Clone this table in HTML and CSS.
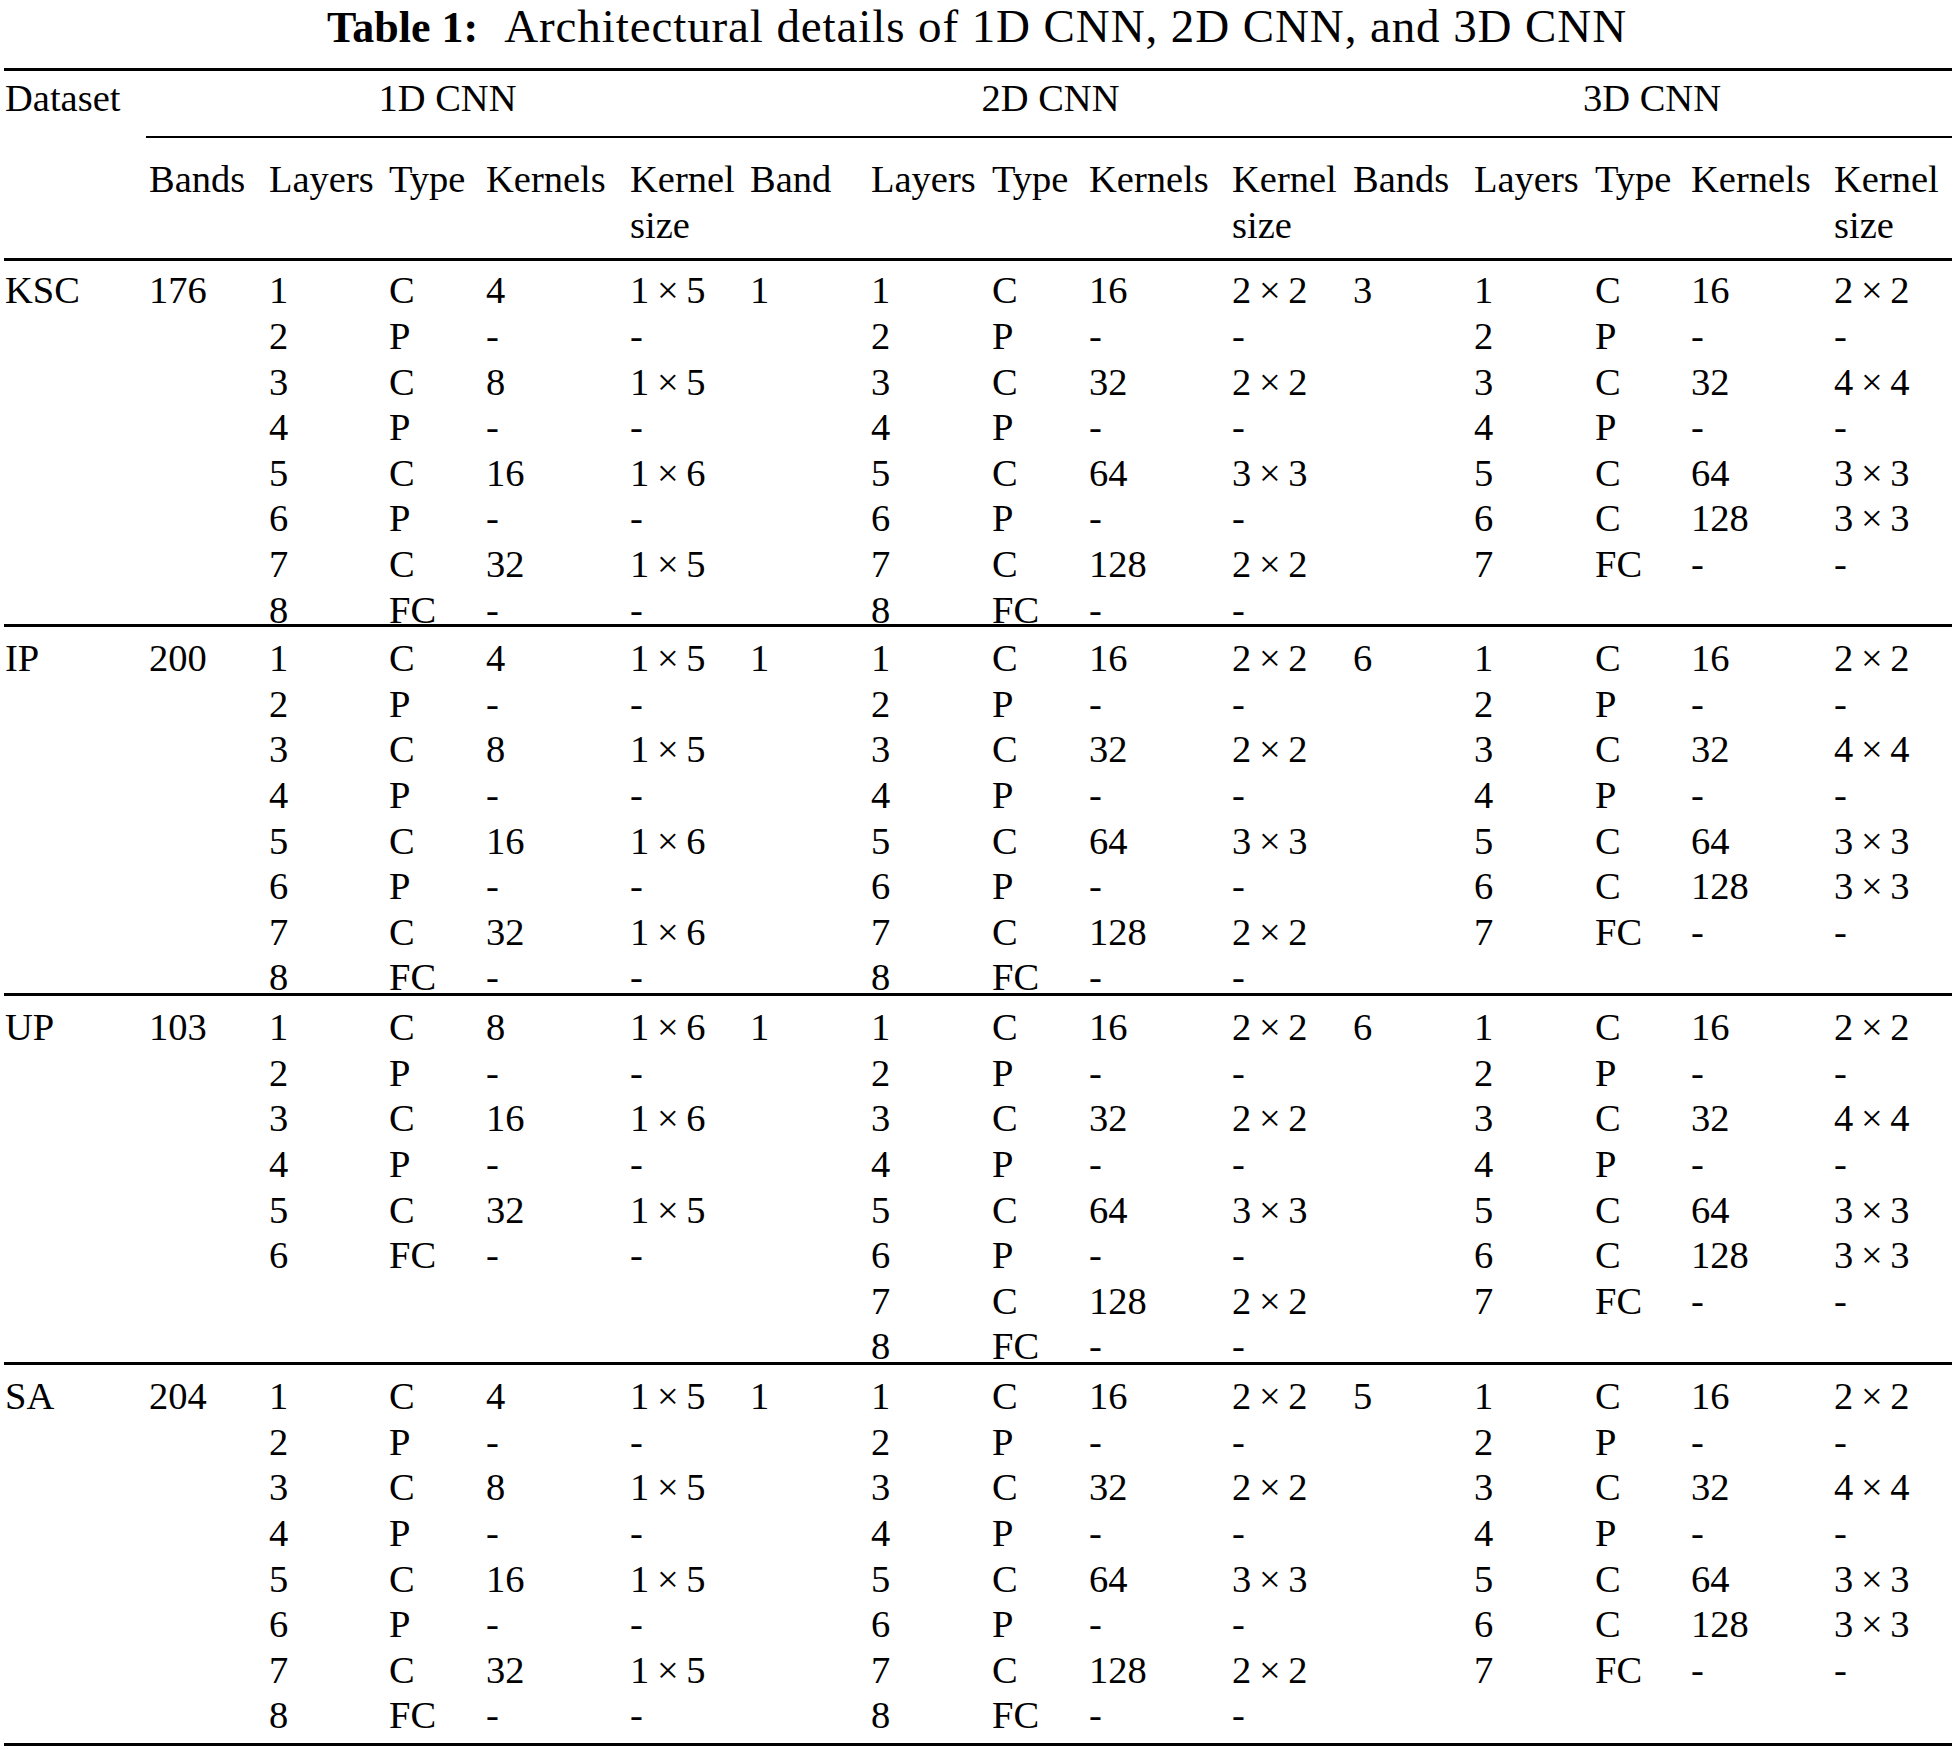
FILE: index.html
```html
<!DOCTYPE html>
<html lang="en">
<head>
<meta charset="utf-8">
<title>Table 1</title>
<link rel="stylesheet" href="styles.css">
</head>
<body>
<div class="page">
  <h1 class="caption"><b class="cap-label">Table 1:</b><span class="cap-text">Architectural details of 1D CNN, 2D CNN, and 3D CNN</span></h1>

  <div class="table">
    <div class="grid head">
      <div class="cell hd-dataset">Dataset</div>
      <div class="cell group g1">1D CNN</div>
      <div class="cell group g2">2D CNN</div>
      <div class="cell group g3">3D CNN</div>

      <div class="cell sub"></div>
      <div class="cell sub">Bands</div>
      <div class="cell sub">Layers</div>
      <div class="cell sub">Type</div>
      <div class="cell sub">Kernels</div>
      <div class="cell sub">Kernel<br>size</div>
      <div class="cell sub">Band</div>
      <div class="cell sub">Layers</div>
      <div class="cell sub">Type</div>
      <div class="cell sub">Kernels</div>
      <div class="cell sub">Kernel<br>size</div>
      <div class="cell sub">Bands</div>
      <div class="cell sub">Layers</div>
      <div class="cell sub">Type</div>
      <div class="cell sub">Kernels</div>
      <div class="cell sub">Kernel<br>size</div>
    </div>

    <!-- KSC -->
    <div class="grid block first">
      <div class="cell">KSC</div>
      <div class="cell">176</div>
      <div class="cell">1<br>2<br>3<br>4<br>5<br>6<br>7<br>8</div>
      <div class="cell">C<br>P<br>C<br>P<br>C<br>P<br>C<br>FC</div>
      <div class="cell">4<br>-<br>8<br>-<br>16<br>-<br>32<br>-</div>
      <div class="cell ks">1 × 5<br>-<br>1 × 5<br>-<br>1 × 6<br>-<br>1 × 5<br>-</div>
      <div class="cell">1</div>
      <div class="cell">1<br>2<br>3<br>4<br>5<br>6<br>7<br>8</div>
      <div class="cell">C<br>P<br>C<br>P<br>C<br>P<br>C<br>FC</div>
      <div class="cell">16<br>-<br>32<br>-<br>64<br>-<br>128<br>-</div>
      <div class="cell ks">2 × 2<br>-<br>2 × 2<br>-<br>3 × 3<br>-<br>2 × 2<br>-</div>
      <div class="cell">3</div>
      <div class="cell">1<br>2<br>3<br>4<br>5<br>6<br>7</div>
      <div class="cell">C<br>P<br>C<br>P<br>C<br>C<br>FC</div>
      <div class="cell">16<br>-<br>32<br>-<br>64<br>128<br>-</div>
      <div class="cell ks">2 × 2<br>-<br>4 × 4<br>-<br>3 × 3<br>3 × 3<br>-</div>
    </div>

    <!-- IP -->
    <div class="grid block">
      <div class="cell">IP</div>
      <div class="cell">200</div>
      <div class="cell">1<br>2<br>3<br>4<br>5<br>6<br>7<br>8</div>
      <div class="cell">C<br>P<br>C<br>P<br>C<br>P<br>C<br>FC</div>
      <div class="cell">4<br>-<br>8<br>-<br>16<br>-<br>32<br>-</div>
      <div class="cell ks">1 × 5<br>-<br>1 × 5<br>-<br>1 × 6<br>-<br>1 × 6<br>-</div>
      <div class="cell">1</div>
      <div class="cell">1<br>2<br>3<br>4<br>5<br>6<br>7<br>8</div>
      <div class="cell">C<br>P<br>C<br>P<br>C<br>P<br>C<br>FC</div>
      <div class="cell">16<br>-<br>32<br>-<br>64<br>-<br>128<br>-</div>
      <div class="cell ks">2 × 2<br>-<br>2 × 2<br>-<br>3 × 3<br>-<br>2 × 2<br>-</div>
      <div class="cell">6</div>
      <div class="cell">1<br>2<br>3<br>4<br>5<br>6<br>7</div>
      <div class="cell">C<br>P<br>C<br>P<br>C<br>C<br>FC</div>
      <div class="cell">16<br>-<br>32<br>-<br>64<br>128<br>-</div>
      <div class="cell ks">2 × 2<br>-<br>4 × 4<br>-<br>3 × 3<br>3 × 3<br>-</div>
    </div>

    <!-- UP -->
    <div class="grid block">
      <div class="cell">UP</div>
      <div class="cell">103</div>
      <div class="cell">1<br>2<br>3<br>4<br>5<br>6</div>
      <div class="cell">C<br>P<br>C<br>P<br>C<br>FC</div>
      <div class="cell">8<br>-<br>16<br>-<br>32<br>-</div>
      <div class="cell ks">1 × 6<br>-<br>1 × 6<br>-<br>1 × 5<br>-</div>
      <div class="cell">1</div>
      <div class="cell">1<br>2<br>3<br>4<br>5<br>6<br>7<br>8</div>
      <div class="cell">C<br>P<br>C<br>P<br>C<br>P<br>C<br>FC</div>
      <div class="cell">16<br>-<br>32<br>-<br>64<br>-<br>128<br>-</div>
      <div class="cell ks">2 × 2<br>-<br>2 × 2<br>-<br>3 × 3<br>-<br>2 × 2<br>-</div>
      <div class="cell">6</div>
      <div class="cell">1<br>2<br>3<br>4<br>5<br>6<br>7</div>
      <div class="cell">C<br>P<br>C<br>P<br>C<br>C<br>FC</div>
      <div class="cell">16<br>-<br>32<br>-<br>64<br>128<br>-</div>
      <div class="cell ks">2 × 2<br>-<br>4 × 4<br>-<br>3 × 3<br>3 × 3<br>-</div>
    </div>

    <!-- SA -->
    <div class="grid block last">
      <div class="cell">SA</div>
      <div class="cell">204</div>
      <div class="cell">1<br>2<br>3<br>4<br>5<br>6<br>7<br>8</div>
      <div class="cell">C<br>P<br>C<br>P<br>C<br>P<br>C<br>FC</div>
      <div class="cell">4<br>-<br>8<br>-<br>16<br>-<br>32<br>-</div>
      <div class="cell ks">1 × 5<br>-<br>1 × 5<br>-<br>1 × 5<br>-<br>1 × 5<br>-</div>
      <div class="cell">1</div>
      <div class="cell">1<br>2<br>3<br>4<br>5<br>6<br>7<br>8</div>
      <div class="cell">C<br>P<br>C<br>P<br>C<br>P<br>C<br>FC</div>
      <div class="cell">16<br>-<br>32<br>-<br>64<br>-<br>128<br>-</div>
      <div class="cell ks">2 × 2<br>-<br>2 × 2<br>-<br>3 × 3<br>-<br>2 × 2<br>-</div>
      <div class="cell">5</div>
      <div class="cell">1<br>2<br>3<br>4<br>5<br>6<br>7</div>
      <div class="cell">C<br>P<br>C<br>P<br>C<br>C<br>FC</div>
      <div class="cell">16<br>-<br>32<br>-<br>64<br>128<br>-</div>
      <div class="cell ks">2 × 2<br>-<br>4 × 4<br>-<br>3 × 3<br>3 × 3<br>-</div>
    </div>
  </div>
</div>
</body>
</html>
```

FILE: styles.css
```css
html, body {
  margin: 0;
  padding: 0;
  background: #ffffff;
}

body {
  font-family: "Liberation Serif", "Times New Roman", serif;
  color: #000000;
}

.page {
  width: 1954px;
  height: 1750px;
  overflow: hidden;
}

.caption {
  margin: 0;
  height: 53px;
  padding-bottom: 15px;
  line-height: 53px;
  text-align: center;
  font-weight: normal;
  white-space: nowrap;
}

.cap-label {
  font-weight: bold;
  font-size: 44px;
  margin-right: 26px;
}

.cap-text {
  font-size: 47px;
  letter-spacing: 0.9px;
}

.table {
  margin-left: 4px;
  width: 1948px;
  border-top: 3px solid #000;
}

.grid {
  display: grid;
  grid-template-columns: 144px 120px 120px 97px 144px 120px 121px 121px 97px 143px 121px 121px 121px 96px 143px 119px;
}

.cell {
  font-size: 38.5px;
  line-height: 45.6px;
  white-space: nowrap;
  padding-left: 1px;
}

.hd-dataset {
  grid-column: 1;
  grid-row: 1;
  padding-top: 5.4px;
}

.group {
  grid-row: 1;
  text-align: center;
  padding-top: 5.4px;
  padding-bottom: 14px;
  border-bottom: 2px solid #000;
  padding-left: 0;
}

.g1 { grid-column: 2 / 7; margin-left: -2px; }
.g2 { grid-column: 7 / 12; }
.g3 { grid-column: 12 / 17; }

.sub {
  grid-row: 2;
  padding-top: 19.4px;
  padding-bottom: 9.4px;
}

.head {
  border-bottom: 3px solid #000;
}

.block {
  padding-top: 9.4px;
  margin-bottom: -8.2px;
  border-top: 3px solid #000;
}

.block.first {
  border-top: 0;
  padding-top: 7.4px;
  margin-bottom: -9.2px;
}

.block.last {
  margin-bottom: 0;
  padding-bottom: 3.8px;
  border-bottom: 3px solid #000;
}

.ks {
  word-spacing: -2px;
}
```
